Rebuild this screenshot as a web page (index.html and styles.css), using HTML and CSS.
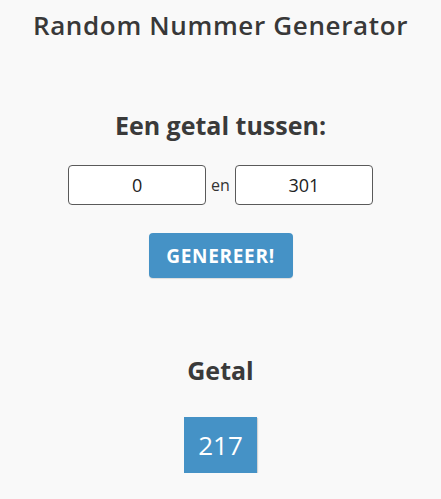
FILE: index.html
```html
<!DOCTYPE html>
<html lang="nl">
<head>
<meta charset="utf-8">
<title>Random Nummer Generator</title>
<link rel="stylesheet" href="styles.css">
</head>
<body>
<main class="page">
  <h1 class="title">Random Nummer Generator</h1>
  <h2 class="subtitle">Een getal tussen:</h2>
  <div class="range">
    <input class="num-input" type="text" value="0">
    <span class="range-sep">en</span>
    <input class="num-input" type="text" value="301">
  </div>
  <button class="btn" type="button">GENEREER!</button>
  <h2 class="result-title">Getal</h2>
  <div class="result">217</div>
</main>
</body>
</html>
```
FILE: styles.css
```css
html, body {
  margin: 0;
  padding: 0;
  background: #f9f9f9;
}
.page {
  display: flex;
  flex-direction: column;
  align-items: center;
  font-family: "Open Sans", "DejaVu Sans", sans-serif;
  color: #333;
}
.title {
  margin: 8px 0 0;
  font-size: 26px;
  line-height: 34px;
  font-weight: 600;
  color: #383838;
  letter-spacing: 0.65px;
}
.subtitle {
  margin: 68px 0 0;
  font-size: 25px;
  line-height: 30px;
  font-weight: 700;
  color: #3a3a3a;
}
.range {
  display: flex;
  align-items: center;
  gap: 5px;
  margin-top: 25px;
}
.num-input {
  box-sizing: border-box;
  width: 138px;
  height: 40px;
  border: 1px solid #5a5a5a;
  border-radius: 4px;
  background: #fff;
  text-align: center;
  font-family: "Open Sans", sans-serif;
  font-size: 18px;
  color: #222;
  padding: 0;
}
.range-sep {
  font-size: 16px;
  color: #333;
}
.btn {
  margin-top: 28px;
  width: 144px;
  height: 45px;
  border: none;
  border-radius: 4px;
  background: #4592c6;
  color: #fff;
  font-family: "Open Sans", sans-serif;
  font-weight: 700;
  font-size: 19px;
  letter-spacing: 0.7px;
  box-shadow: 0 1px 1px rgba(0,0,0,0.12);
}
.result-title {
  margin: 77px 0 0;
  font-size: 25px;
  line-height: 30px;
  font-weight: 700;
  color: #3a3a3a;
}
.result {
  margin-top: 32px;
  box-sizing: border-box;
  width: 73px;
  height: 56px;
  background: #4592c6;
  color: #fff;
  font-size: 26px;
  line-height: 56px;
  text-align: center;
  box-shadow: 1px 1px 1px rgba(0,0,0,0.15);
}
```
